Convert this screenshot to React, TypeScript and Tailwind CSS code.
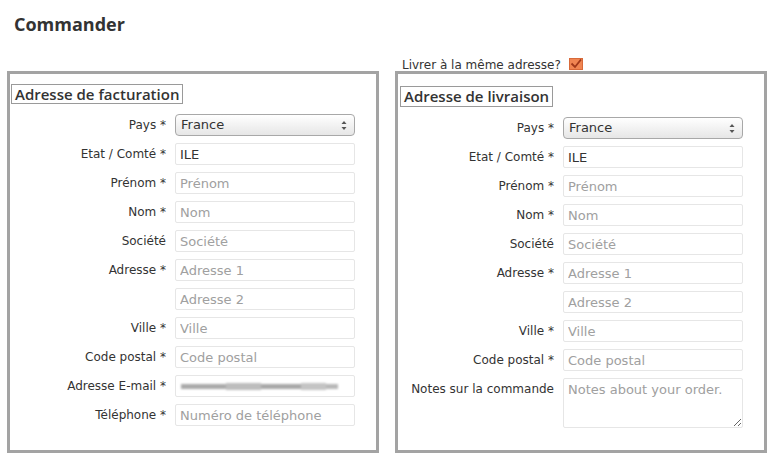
import React from 'react';

type Row = { label: string; value?: string; placeholder?: string; kind?: 'select' | 'text' | 'email' | 'textarea' };

const billing: Row[] = [
  { label: 'Pays *', value: 'France', kind: 'select' },
  { label: 'Etat / Comté *', value: 'ILE' },
  { label: 'Prénom *', placeholder: 'Prénom' },
  { label: 'Nom *', placeholder: 'Nom' },
  { label: 'Société', placeholder: 'Société' },
  { label: 'Adresse *', placeholder: 'Adresse 1' },
  { label: '', placeholder: 'Adresse 2' },
  { label: 'Ville *', placeholder: 'Ville' },
  { label: 'Code postal *', placeholder: 'Code postal' },
  { label: 'Adresse E-mail *', kind: 'email' },
  { label: 'Téléphone *', placeholder: 'Numéro de téléphone' },
];

const shipping: Row[] = [
  { label: 'Pays *', value: 'France', kind: 'select' },
  { label: 'Etat / Comté *', value: 'ILE' },
  { label: 'Prénom *', placeholder: 'Prénom' },
  { label: 'Nom *', placeholder: 'Nom' },
  { label: 'Société', placeholder: 'Société' },
  { label: 'Adresse *', placeholder: 'Adresse 1' },
  { label: '', placeholder: 'Adresse 2' },
  { label: 'Ville *', placeholder: 'Ville' },
  { label: 'Code postal *', placeholder: 'Code postal' },
  { label: 'Notes sur la commande', placeholder: 'Notes about your order.', kind: 'textarea' },
];

const inputCls =
  'block w-[180px] h-[22px] border border-[#e6e6e6] rounded-[2px] bg-white px-[4px] text-[13px] text-[#333] placeholder:text-[#a0a0a0] outline-none';

function Field({ row }: { row: Row }) {
  let control: React.ReactNode;
  if (row.kind === 'select') {
    control = (
      <div className="relative w-[180px] h-[22px] rounded-[4px] border border-[#a8a8a8] bg-gradient-to-b from-white to-[#e6e6e6] flex items-center px-[5px] text-[13px] text-[#333]">
        {row.value}
        <svg className="absolute right-[7px] top-[5px]" width="6" height="11" viewBox="0 0 6 11">
          <path d="M3 1 L5.5 4 L0.5 4 Z" fill="#555" />
          <path d="M3 10 L5.5 7 L0.5 7 Z" fill="#555" />
        </svg>
      </div>
    );
  } else if (row.kind === 'email') {
    control = (
      <div className="w-[180px] h-[22px] border border-[#e6e6e6] rounded-[2px] bg-white flex items-center px-[5px]">
        <div className="flex items-center blur-[1px]">
          <div className="w-[45px] h-[5px] bg-[#aaaaaa]" />
          <div className="w-[35px] h-[7px] bg-[#bdbdbd]" />
          <div className="w-[40px] h-[5px] bg-[#a8a8a8]" />
          <div className="w-[25px] h-[7px] bg-[#c4c4c4]" />
          <div className="w-[12px] h-[5px] bg-[#b8b8b8]" />
        </div>
      </div>
    );
  } else if (row.kind === 'textarea') {
    control = (
      <textarea
        className="block w-[180px] h-[50px] border border-[#e6e6e6] rounded-[2px] bg-white px-[4px] py-[1px] text-[13px] text-[#333] placeholder:text-[#a0a0a0] outline-none"
        placeholder={row.placeholder}
      />
    );
  } else {
    control = (
      <input className={inputCls} defaultValue={row.value} placeholder={row.placeholder} />
    );
  }
  return (
    <div className={`flex ${row.kind === 'textarea' ? 'items-start' : 'items-center'}`}>
      <label className={`w-[156px] shrink-0 text-right text-[12px] leading-[16px] text-[#333] ${row.kind === 'textarea' ? 'pt-[3px]' : ''}`}>
        {row.label}
      </label>
      <div className="ml-[9px] flex">{control}</div>
    </div>
  );
}

function AddressBox({ title, rows, shift }: { title: string; rows: Row[]; shift?: boolean }) {
  return (
    <div className={`h-full border-[3px] border-[#a3a3a3] bg-white ${shift ? 'pt-[12px]' : 'pt-[10px]'}`}>
      <div
        className={`${shift ? 'ml-[2px] h-[21px]' : 'ml-px h-[20px]'} flex w-fit items-center border border-[#9a9a9a] px-[3px] text-[15px] font-semibold text-[#333] leading-none`}
        style={{ fontFamily: '"Open Sans", sans-serif' }}
      >
        {title}
      </div>
      <div className="mt-[10px] flex flex-col gap-y-[7px]">
        {rows.map((r, i) => (
          <Field key={i} row={r} />
        ))}
      </div>
    </div>
  );
}

export default function App() {
  return (
    <div className="w-[780px] h-[468px] bg-white px-[7px] pt-[11px]" style={{ fontFamily: '"DejaVu Sans", sans-serif' }}>
      <h1 className="ml-[7px] text-[18px] font-bold text-[#333] leading-[26px]" style={{ fontFamily: '"Open Sans", sans-serif' }}>
        Commander
      </h1>
      <div className="mt-[6px] grid grid-cols-[372px_372px] grid-rows-[28px_382px] gap-x-[16px]">
        <div />
        <div className="flex items-end h-[28px] pl-[7px] text-[12px] leading-[15px] text-[#333]">
          <span className="mb-[-2px]">Livrer à la même adresse?</span>
          <span className="ml-[8px] mb-[1px] w-[14px] h-[12px] bg-[#f08552] border border-[#d86a3a] flex items-center justify-center">
            <svg width="12" height="10" viewBox="0 0 12 10">
              <path d="M1.5 4.5 L5 8 L11 0.5" stroke="#a0381a" strokeWidth="1.8" fill="none" />
            </svg>
          </span>
        </div>
        <AddressBox title="Adresse de facturation" rows={billing} />
        <AddressBox title="Adresse de livraison" rows={shipping} shift />
      </div>
    </div>
  );
}
